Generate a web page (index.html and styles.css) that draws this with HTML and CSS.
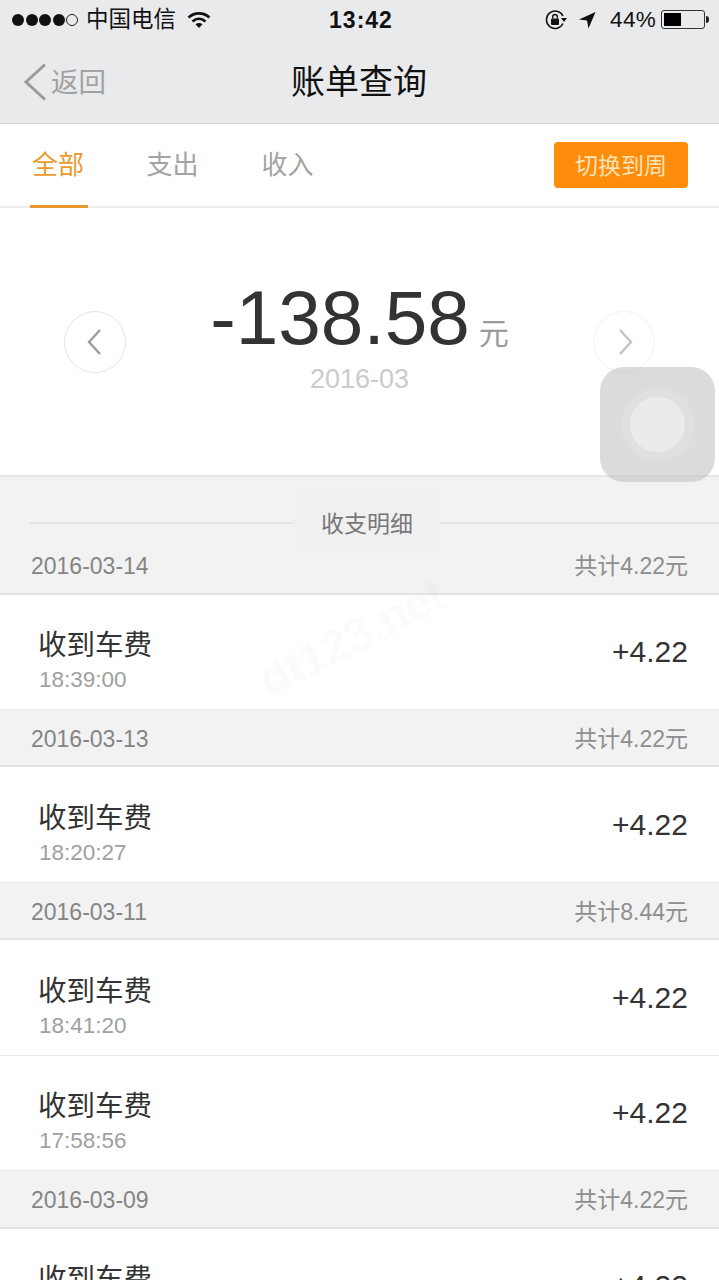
FILE: index.html
```html
<!DOCTYPE html>
<html lang="zh">
<head>
<meta charset="utf-8">
<title>账单查询</title>
<link rel="stylesheet" href="styles.css">
</head>
<body>
<div class="page">
  <header class="top">
    <div class="status">
      <div class="status-left">
        <span class="dots"><i></i><i></i><i></i><i></i><i class="off"></i></span>
        <span class="carrier">中国电信</span>
        <svg class="wifi" width="24" height="18" viewBox="0 0 24 18"><path d="M1.500 6.500C7.500 1 16.500 1 22.500 6.500" fill="none" stroke="#111" stroke-width="2.600"/><path d="M5.500 10.500C9.500 7 14.500 7 18.500 10.500" fill="none" stroke="#111" stroke-width="2.600"/><path d="M8.500 13.200C10.800 11.500 13.200 11.500 15.500 13.200L12 17Z" fill="#111"/></svg>
      </div>
      <div class="clock">13:42</div>
      <div class="status-right">
        <svg class="lock" width="24" height="22" viewBox="0 0 24 22"><path d="M19 14.500A8.700 8.700 0 1 1 19 7" fill="none" stroke="#111" stroke-width="1.500"/><path d="M17 9h6l-3 4Z" fill="#111"/><rect x="7" y="9.500" width="8" height="6.500" rx="1" fill="#111"/><path d="M8.700 9.500V7.800a2.300 2.300 0 0 1 4.600 0V9.500" fill="none" stroke="#111" stroke-width="1.400"/></svg>
        <svg class="arrow" width="18" height="18" viewBox="0 0 18 18"><path d="M17.500 1L1 8.500 9 9.500 10.500 17.500Z" fill="#111"/></svg>
        <span class="pct">44%</span>
        <span class="batt"><span class="batt-fill"></span></span><span class="batt-tip"></span>
      </div>
    </div>
    <nav class="nav">
      <div class="back">
        <svg width="26" height="38" viewBox="0 0 26 38"><path d="M23 1.500L4 19 23 36.500" fill="none" stroke="#9a9a9a" stroke-width="3"/></svg>
        <span>返回</span>
      </div>
      <h1>账单查询</h1>
    </nav>
  </header>

  <section class="tabs">
    <div class="tab active">全部</div>
    <div class="tab">支出</div>
    <div class="tab">收入</div>
    <button class="switch">切换到周</button>
  </section>

  <section class="summary">
    <div class="circle">
      <svg class="prev" width="16" height="28" viewBox="0 0 16 28"><path d="M14 2L3 14 14 26" fill="none" stroke="#9c9c9c" stroke-width="2.400"/></svg>
    </div>
    <div class="amount">
      <div class="figure"><span class="num">-138.58</span><span class="unit">元</span></div>
      <div class="month">2016-03</div>
    </div>
    <div class="circle faint">
      <svg class="next" width="16" height="28" viewBox="0 0 16 28"><path d="M2 2L13 14 2 26" fill="none" stroke="#c4c4c4" stroke-width="2.400"/></svg>
    </div>
  </section>

  <section class="detail">
    <div class="detail-title"><span>收支明细</span></div>

    <div class="day"><span>2016-03-14</span><span class="total">共计4.22元</span></div>
    <div class="item"><div><div class="name">收到车费</div><div class="time">18:39:00</div></div><div class="val">+4.22</div></div>

    <div class="day"><span>2016-03-13</span><span class="total">共计4.22元</span></div>
    <div class="item"><div><div class="name">收到车费</div><div class="time">18:20:27</div></div><div class="val">+4.22</div></div>

    <div class="day"><span>2016-03-11</span><span class="total">共计8.44元</span></div>
    <div class="item"><div><div class="name">收到车费</div><div class="time">18:41:20</div></div><div class="val">+4.22</div></div>
    <div class="item"><div><div class="name">收到车费</div><div class="time">17:58:56</div></div><div class="val">+4.22</div></div>

    <div class="day"><span>2016-03-09</span><span class="total">共计4.22元</span></div>
    <div class="item"><div><div class="name">收到车费</div><div class="time">&nbsp;</div></div><div class="val">+4.22</div></div>
  </section>

  <div class="watermark">dt123.net</div>
  <div class="assistive"><div class="ring"><div class="core"></div></div></div>
</div>
</body>
</html>
```

FILE: styles.css
```css
* { box-sizing: border-box; }
html, body { margin: 0; padding: 0; }
body {
  background: #f2f2f2;
  font-family: "Liberation Sans", "Noto Sans CJK SC", sans-serif;
}
.page { position: relative; width: 719px; height: 1280px; overflow: hidden; }

.top { background: #e9eaec; height: 124px; border-bottom: 1px solid #d8d8d8; }
.status { height: 39px; padding: 0 10px 0 12px; display: grid; grid-template-columns: 1fr auto 1fr; align-items: center; color: #111; }
.status-left { display: flex; align-items: center; }
.dots { display: flex; gap: 1.500px; }
.dots i { width: 12px; height: 12px; border-radius: 50%; background: #111; }
.dots i.off { background: none; border: 1px solid #222; }
.carrier { font-size: 22.500px; line-height: 26px; margin: 1px 0 0 8px; }
.wifi { margin-left: 11px; }
.clock { font-size: 23px; font-weight: 700; letter-spacing: 1px; padding: 1px 0 0 1px; }
.status-right { display: flex; align-items: center; justify-content: flex-end; }
.lock { margin-right: 1px; }
.arrow { margin: 0 0 0 9px; }
.pct { font-size: 22.500px; margin-left: 14px; letter-spacing: .3px; }
.batt { width: 44px; height: 19px; margin-left: 5px; padding: 2px; border: 1px solid #333; border-radius: 3px; display: block; }
.batt-fill { display: block; width: 17px; height: 100%; background: #000; }
.batt-tip { width: 3px; height: 7px; margin-left: 1px; background: #222; border-radius: 0 3px 3px 0; }

.nav { position: relative; height: 84px; display: flex; align-items: center; justify-content: center; padding-bottom: 4px; }
.nav h1 { margin: 0 0 0 -1px; font-size: 34px; font-weight: 400; color: #111; }
.back { position: absolute; left: 22px; top: 24px; display: flex; align-items: center; color: #a2a2a2; font-size: 27.500px; }
.back svg { margin-right: 2px; }
.back span { margin: -5px 0 0 1px; }

.tabs { height: 84px; background: #fff; border-bottom: 2px solid #ececec; display: flex; padding: 0 31px 0 30px; }
.tab { width: 58px; height: 84px; margin-right: 57px; padding-right: 3px; border-bottom: 3px solid transparent; color: #a3a3a3; font-size: 26px; text-align: center; line-height: 83px; }
.tab.active { color: #e99a2f; border-bottom-color: #e99a2f; padding-right: 2px; }
.switch { margin: 18px 0 0 auto; width: 134px; height: 46px; padding: 0 0 2px; border: 0; border-radius: 4px; background: #ff8c0a; color: #fde3b8; font: inherit; font-size: 23px; }

.summary { height: 269px; background: #fff; border-bottom: 2px solid #e6e6e6; display: flex; align-items: flex-start; justify-content: space-between; padding: 103px 64px 0; }
.circle { width: 62px; height: 62px; border: 1px solid #e4e4e4; border-radius: 50%; display: flex; align-items: center; justify-content: center; }
.circle.faint { border-color: #f0f0f0; }
.prev { margin-right: 2px; }
.next { margin-left: 4px; }
.amount { position: absolute; left: 0; right: 0; top: 274px; text-align: center; }
.figure { display: flex; justify-content: center; align-items: baseline; }
.num { font-size: 76.500px; line-height: 88px; color: #333; }
.unit { font-size: 30px; color: #9a9a9a; margin-left: 9px; }
.month { font-size: 27px; color: #cbcbcb; margin-top: 2px; }

.detail-title { height: 59.500px; margin: 0 0 0 30px; position: relative; display: flex; align-items: center; }
.detail-title::before { content: ""; position: absolute; left: 0; right: 0; top: 45px; height: 2px; background: #e5e5e5; }
.detail-title span { position: relative; z-index: 1; margin: 24px 0 0 264px; width: 146px; height: 66px; line-height: 76px; text-align: center; background: #f0f0f0; color: #777; font-size: 23px; }

.day { height: 57.670px; border-bottom: 2px solid #e2e2e2; padding: 3px 31px 0 31px; display: flex; justify-content: space-between; align-items: center; color: #858585; font-size: 23px; background: #f2f2f2; }
.total { color: #8e8e8e; font-size: 23px; margin-top: -4px; }
.detail-title + .day { height: 58px; background: transparent; }
.item { height: 115.330px; background: #fff; border-bottom: 1px solid #e8e8e8; padding: 0 31px 0 38px; display: flex; justify-content: space-between; align-items: center; }
.item > div:first-child { padding-top: 18px; }
.name { font-size: 28.500px; line-height: 36px; color: #333; }
.time { font-size: 22.500px; line-height: 30px; color: #a0a0a0; margin: 2px 0 0 1px; }
.val { font-size: 30px; color: #333; }

.watermark { position: absolute; left: 232px; top: 610px; width: 240px; text-align: center; font-size: 46px; font-weight: 700; color: #000; opacity: .012; transform: rotate(-27deg); }
.assistive { position: absolute; left: 600px; top: 367px; width: 115px; height: 115px; border-radius: 24px; background: rgba(190,190,190,.56); display: flex; align-items: center; justify-content: center; }
.ring { width: 72px; height: 72px; border-radius: 50%; background: #e0e0e0; box-shadow: 0 0 8px 2px #dedede; display: flex; align-items: center; justify-content: center; }
.core { width: 55px; height: 55px; border-radius: 50%; background: #ebebeb; }
```
